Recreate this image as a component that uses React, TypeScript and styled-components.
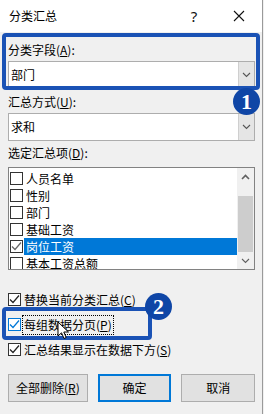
import React from "react";
import styled, { createGlobalStyle } from "styled-components";

const Global = createGlobalStyle`
  html, body { margin: 0; padding: 0; background: #f0f0f0; }
  body {
    font-family: "Noto Sans CJK SC", "Noto Sans", sans-serif;
    font-size: 12px;
    line-height: 16px;
    color: #000;
  }
  * { box-sizing: border-box; }
`;

const Window = styled.div`
  position: relative;
  width: 263px;
  height: 414px;
  background: #f0f0f0;
  border-right: 1px solid #9a9a9a;
  display: flex;
  flex-direction: column;
  overflow: hidden;
`;

const TitleBar = styled.div`
  height: 32px;
  background: #fff;
  display: flex;
  align-items: center;
  padding-left: 9px;
`;

const Title = styled.div`
  flex: 1;
  font-size: 12px;
`;

const TitleButton = styled.div<{ $w: number }>`
  width: ${(p) => p.$w}px;
  height: 32px;
  display: flex;
  align-items: center;
  justify-content: center;
  font-family: "Noto Sans", sans-serif;
  font-size: 15px;
  color: #111;
`;

const Content = styled.div`
  display: flex;
  flex-direction: column;
  padding: 0 7px 0 8px;
`;

const Label = styled.div<{ $mt: number }>`
  margin-top: ${(p) => p.$mt}px;
  height: 16px;
  white-space: nowrap;
`;

const Combo = styled.div<{ $mt: number }>`
  margin-top: ${(p) => p.$mt}px;
  height: 28px;
  display: flex;
  background: #fff;
  border: 1px solid #adadad;
`;

const ComboText = styled.div`
  flex: 1;
  display: flex;
  align-items: center;
  padding-left: 2px;
`;

const ComboArrow = styled.div`
  width: 16px;
  background: #e5e5e5;
  border-left: 1px solid #cfcfcf;
  display: flex;
  align-items: center;
  justify-content: center;
`;

const ListBox = styled.div`
  margin-top: 6px;
  height: 103px;
  border: 1px solid #828282;
  background: #fff;
  display: flex;
  overflow: hidden;
`;

const ListRows = styled.div`
  flex: 1;
  padding-top: 2px;
  padding-left: 1px;
  display: flex;
  flex-direction: column;
`;

const ListRow = styled.div`
  height: 17px;
  flex: none;
  display: flex;
  align-items: center;
`;

const RowText = styled.div<{ $selected?: boolean }>`
  flex: 1;
  height: 17px;
  margin-left: 1px;
  padding-left: 2px;
  display: flex;
  align-items: center;
  background: ${(p) => (p.$selected ? "#0078d7" : "transparent")};
  color: ${(p) => (p.$selected ? "#fff" : "#000")};
  font-size: 12px;
  line-height: 15px;
`;

const ScrollBar = styled.div`
  width: 17px;
  background: #f0f0f0;
  display: flex;
  flex-direction: column;
`;

const ScrollArrow = styled.div`
  height: 17px;
  display: flex;
  align-items: center;
  justify-content: center;
`;

const ScrollTrack = styled.div`
  flex: 1;
  padding: 11px 1px 0;
  display: flex;
`;

const ScrollThumb = styled.div`
  flex: 1;
  background: #cdcdcd;
`;

const Box = styled.span<{ $accent?: boolean }>`
  width: 13px;
  height: 13px;
  flex: none;
  background: #fff;
  border: 1px solid ${(p) => (p.$accent ? "#0078d7" : "#333")};
  display: flex;
  align-items: center;
  justify-content: center;
`;

const Options = styled.div`
  margin-top: 17px;
  display: flex;
  flex-direction: column;
`;

const OptionRow = styled.div`
  height: 25px;
  display: flex;
  align-items: center;
`;

const OptionText = styled.span<{ $focus?: boolean }>`
  margin-left: ${(p) => (p.$focus ? 2 : 3)}px;
  padding: 1px ${(p) => (p.$focus ? 1 : 0)}px;
  outline: ${(p) => (p.$focus ? "1px dotted #000" : "none")};
  font-size: 12px;
  white-space: nowrap;
`;

const Buttons = styled.div`
  margin-top: 12px;
  display: flex;
  gap: 10px;
`;

const Button = styled.div<{ $w: number; $default?: boolean }>`
  width: ${(p) => p.$w}px;
  height: 28px;
  background: #e1e1e1;
  border: ${(p) => (p.$default ? "2px solid #0078d7" : "1px solid #adadad")};
  display: flex;
  align-items: center;
  justify-content: center;
  font-size: 12px;
`;

const Highlight = styled.div<{ $x: number; $y: number; $w: number; $h: number }>`
  position: absolute;
  left: ${(p) => p.$x}px;
  top: ${(p) => p.$y}px;
  width: ${(p) => p.$w}px;
  height: ${(p) => p.$h}px;
  border: 4px solid #1a52b5;
  border-radius: 4px;
  pointer-events: none;
`;

const Badge = styled.div<{ $x: number; $y: number }>`
  position: absolute;
  left: ${(p) => p.$x}px;
  top: ${(p) => p.$y}px;
  width: 27px;
  height: 27px;
  border-radius: 50%;
  background: #0f46a6;
  color: #fff;
  font-family: "Liberation Serif", "DejaVu Serif", serif;
  font-weight: bold;
  font-size: 22px;
  line-height: 27px;
  text-align: center;
`;

const Cursor = styled.svg`
  position: absolute;
  left: 57px;
  top: 321px;
`;

const Chevron = ({ up, color = "#555" }: { up?: boolean; color?: string }) => (
  <svg width="9" height="6" viewBox="0 0 9 6">
    <polyline
      points={up ? "1,5 4.5,1.5 8,5" : "1,1 4.5,4.5 8,1"}
      fill="none"
      stroke={color}
      strokeWidth={up ? 1.6 : 1.1}
    />
  </svg>
);

const Check = ({ color }: { color: string }) => (
  <svg width="11" height="11" viewBox="0 0 11 11">
    <polyline points="1,5.5 4,8.5 10,1.5" fill="none" stroke={color} strokeWidth="1.2" />
  </svg>
);

const Checkbox = ({ checked, accent, color = "#222" }: { checked?: boolean; accent?: boolean; color?: string }) => (
  <Box $accent={accent}>{checked && <Check color={accent ? "#0078d7" : color} />}</Box>
);

const U = styled.span`
  text-decoration: underline;
  text-underline-offset: 1px;
`;

const listItems = [
  { name: "人员名单", checked: false },
  { name: "性别", checked: false },
  { name: "部门", checked: false },
  { name: "基础工资", checked: false },
  { name: "岗位工资", checked: true, selected: true },
  { name: "基本工资总额", checked: false },
];

export default function App() {
  return (
    <>
      <Global />
      <Window>
        <TitleBar>
          <Title>分类汇总</Title>
          <TitleButton $w={44}>?</TitleButton>
          <TitleButton $w={46}>
            <svg width="12" height="12" viewBox="0 0 12 12">
              <path d="M1 1 L11 11 M11 1 L1 11" stroke="#111" strokeWidth="1.1" />
            </svg>
          </TitleButton>
        </TitleBar>
        <Content>
          <Label $mt={10}>
            分类字段(<U>A</U>):
          </Label>
          <Combo $mt={3}>
            <ComboText>部门</ComboText>
            <ComboArrow>
              <Chevron />
            </ComboArrow>
          </Combo>
          <Label $mt={5}>
            汇总方式(<U>U</U>):
          </Label>
          <Combo $mt={3}>
            <ComboText>求和</ComboText>
            <ComboArrow>
              <Chevron />
            </ComboArrow>
          </Combo>
          <Label $mt={4}>
            选定汇总项(<U>D</U>):
          </Label>
          <ListBox>
            <ListRows>
              {listItems.map((it) => (
                <ListRow key={it.name}>
                  <Checkbox checked={it.checked} color="#666" />
                  <RowText $selected={it.selected}>{it.name}</RowText>
                </ListRow>
              ))}
            </ListRows>
            <ScrollBar>
              <ScrollArrow>
                <Chevron up color="#606060" />
              </ScrollArrow>
              <ScrollTrack>
                <ScrollThumb />
              </ScrollTrack>
              <ScrollArrow>
                <Chevron color="#606060" />
              </ScrollArrow>
            </ScrollBar>
          </ListBox>
          <Options>
            <OptionRow>
              <Checkbox checked />
              <OptionText>
                替换当前分类汇总(<U>C</U>)
              </OptionText>
            </OptionRow>
            <OptionRow>
              <Checkbox checked accent />
              <OptionText $focus>
                每组数据分页(<U>P</U>)
              </OptionText>
            </OptionRow>
            <OptionRow>
              <Checkbox checked />
              <OptionText>
                汇总结果显示在数据下方(<U>S</U>)
              </OptionText>
            </OptionRow>
          </Options>
          <Buttons>
            <Button $w={80}>
              <span>
                全部删除(<U>R</U>)
              </span>
            </Button>
            <Button $w={74} $default>
              确定
            </Button>
            <Button $w={74}>取消</Button>
          </Buttons>
        </Content>

        <Highlight $x={2} $y={33} $w={258} $h={57} />
        <Badge $x={233} $y={88}>1</Badge>
        <Highlight $x={2} $y={307} $w={150} $h={33} />
        <Badge $x={145} $y={293}>2</Badge>
        <Cursor width="13" height="19" viewBox="0 0 13 19">
          <path
            d="M1 1 L1 15 L4.5 11.8 L7 17.5 L9.2 16.5 L6.8 11 L11.5 11 Z"
            fill="#fff"
            stroke="#000"
            strokeWidth="1"
            strokeLinejoin="round"
          />
        </Cursor>
      </Window>
    </>
  );
}
